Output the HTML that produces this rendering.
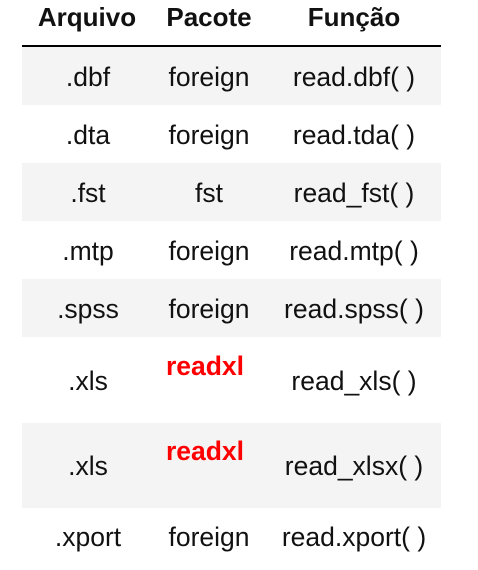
<!DOCTYPE html>
<html><head><style>
body{margin:0;background:#fff;width:478px;height:570px;overflow:hidden;font-family:"Liberation Sans",Arial,sans-serif;color:#111;}
.hdr{position:absolute;top:0;left:22px;width:419px;height:45px;border-bottom:2px solid #000;}
.row{position:absolute;left:22px;width:419px;}
.g{background:#f4f4f4;}
.t{position:absolute;font-size:26.5px;transform:translateX(-50%);white-space:nowrap;line-height:1;}
.b{font-weight:bold;font-size:26px;}
.r{color:#f00;font-weight:bold;font-size:26.5px;}
</style></head><body>
<div class="hdr"></div>
<div class="row g" style="top:47px;height:58px"></div>
<div class="row g" style="top:163px;height:58px"></div>
<div class="row g" style="top:279px;height:58px"></div>
<div class="row g" style="top:423px;height:85px"></div>

<div class="t b" style="left:87px;top:4px">Arquivo</div>
<div class="t b" style="left:209px;top:4px">Pacote</div>
<div class="t b" style="left:354px;top:4px">Função</div>

<div class="t" style="left:88px;top:64px">.dbf</div>
<div class="t" style="left:209px;top:64px">foreign</div>
<div class="t" style="left:354px;top:64px">read.dbf( )</div>

<div class="t" style="left:88px;top:122px">.dta</div>
<div class="t" style="left:209px;top:122px">foreign</div>
<div class="t" style="left:354px;top:122px">read.tda( )</div>

<div class="t" style="left:88px;top:180px">.fst</div>
<div class="t" style="left:209px;top:180px">fst</div>
<div class="t" style="left:354px;top:180px">read_fst( )</div>

<div class="t" style="left:88px;top:238px">.mtp</div>
<div class="t" style="left:209px;top:238px">foreign</div>
<div class="t" style="left:354px;top:238px">read.mtp( )</div>

<div class="t" style="left:88px;top:296px">.spss</div>
<div class="t" style="left:209px;top:296px">foreign</div>
<div class="t" style="left:354px;top:296px">read.spss( )</div>

<div class="t" style="left:88px;top:368px">.xls</div>
<div class="t r" style="left:205px;top:353px">readxl</div>
<div class="t" style="left:354px;top:368px">read_xls( )</div>

<div class="t" style="left:88px;top:453px">.xls</div>
<div class="t r" style="left:205px;top:438px">readxl</div>
<div class="t" style="left:354px;top:453px">read_xlsx( )</div>

<div class="t" style="left:88px;top:524px">.xport</div>
<div class="t" style="left:209px;top:524px">foreign</div>
<div class="t" style="left:354px;top:524px">read.xport( )</div>
</body></html>
